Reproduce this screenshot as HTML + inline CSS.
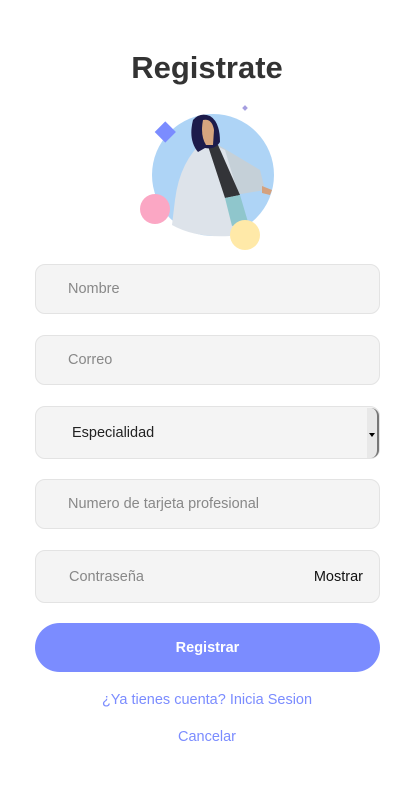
<!DOCTYPE html>
<html><head><meta charset="utf-8"><style>
body{margin:0;width:414px;height:786px;background:#fff;font-family:"Liberation Sans",sans-serif;position:relative;overflow:hidden}
h1{position:absolute;top:50px;left:0;width:414px;text-align:center;margin:0;font-size:31px;font-weight:bold;color:#333;line-height:36px}
.f{position:absolute;left:35px;width:345px;background:#f4f4f4;border:1px solid #e3e3e3;border-radius:10px;box-sizing:border-box;font-size:14.5px;color:#888;padding-left:32px;display:flex;align-items:center}
.btn{position:absolute;left:35px;top:623px;width:345px;height:49px;border-radius:25px;background:#7b8cff;color:#fff;font-weight:bold;font-size:14.5px;display:flex;align-items:center;justify-content:center}
.l{position:absolute;left:0;width:414px;text-align:center;color:#7b8cff;font-size:14.5px}
</style></head><body>
<h1>Registrate</h1>
<svg style="position:absolute;left:0;top:0" width="414" height="260">
<circle cx="213" cy="175" r="61" fill="#aed4f6"/>
<circle cx="155" cy="209" r="15" fill="#fba7c4"/>
<rect x="158" y="125" width="15" height="15" fill="#7b8cff" transform="rotate(45 166 132)"/>
<rect x="243" y="106" width="4" height="4" fill="#a59ee0" transform="rotate(45 245 108)"/>
<path d="M210 140 L260 170 L265 190 L235 195 Z" fill="#c5d0d8"/>
<path d="M205 140 Q180 160 175 200 L172 225 Q195 238 230 236 L240 200 L225 150 Z" fill="#dde3ea"/>
<path d="M207 143 L218 145 L240 195 L225 198 Z" fill="#333438"/>
<path d="M225 198 L240 195 L248 222 L232 226 Z" fill="#8fc6cc"/>
<path d="M262 186 L272 190 L270 195 L262 193Z" fill="#d4a17e"/>
<path d="M193 120 Q200 112 210 116 Q220 122 220 142 Q215 150 205 148 L198 152 Q188 140 193 120Z" fill="#1c1b4b"/>
<path d="M203 120 Q212 118 214 130 L213 145 L206 145 Q200 135 203 120Z" fill="#d6a57f"/>
<circle cx="245" cy="235" r="15" fill="#ffe9a8"/>
</svg>
<div class="f" style="top:264px;height:50px">Nombre</div>
<div class="f" style="top:335px;height:50px">Correo</div>
<div class="f" style="top:406px;height:53px;color:#222;padding-left:36px">Especialidad
<div style="position:absolute;right:0;top:1px;width:10px;height:50px;background:#e8e8e8;border-right:2px solid #777;border-radius:0 8px 8px 0"></div>
<div style="position:absolute;right:4px;top:26px;border:3px solid transparent;border-top:4px solid #000"></div></div>
<div class="f" style="top:479px;height:50px">Numero de tarjeta profesional</div>
<div class="f" style="top:550px;height:53px;padding-left:33px">Contraseña<span style="position:absolute;right:16px;color:#111">Mostrar</span></div>
<div class="btn">Registrar</div>
<div class="l" style="top:692px">¿Ya tienes cuenta? Inicia Sesion</div>
<div class="l" style="top:729px">Cancelar</div>
</body></html>
